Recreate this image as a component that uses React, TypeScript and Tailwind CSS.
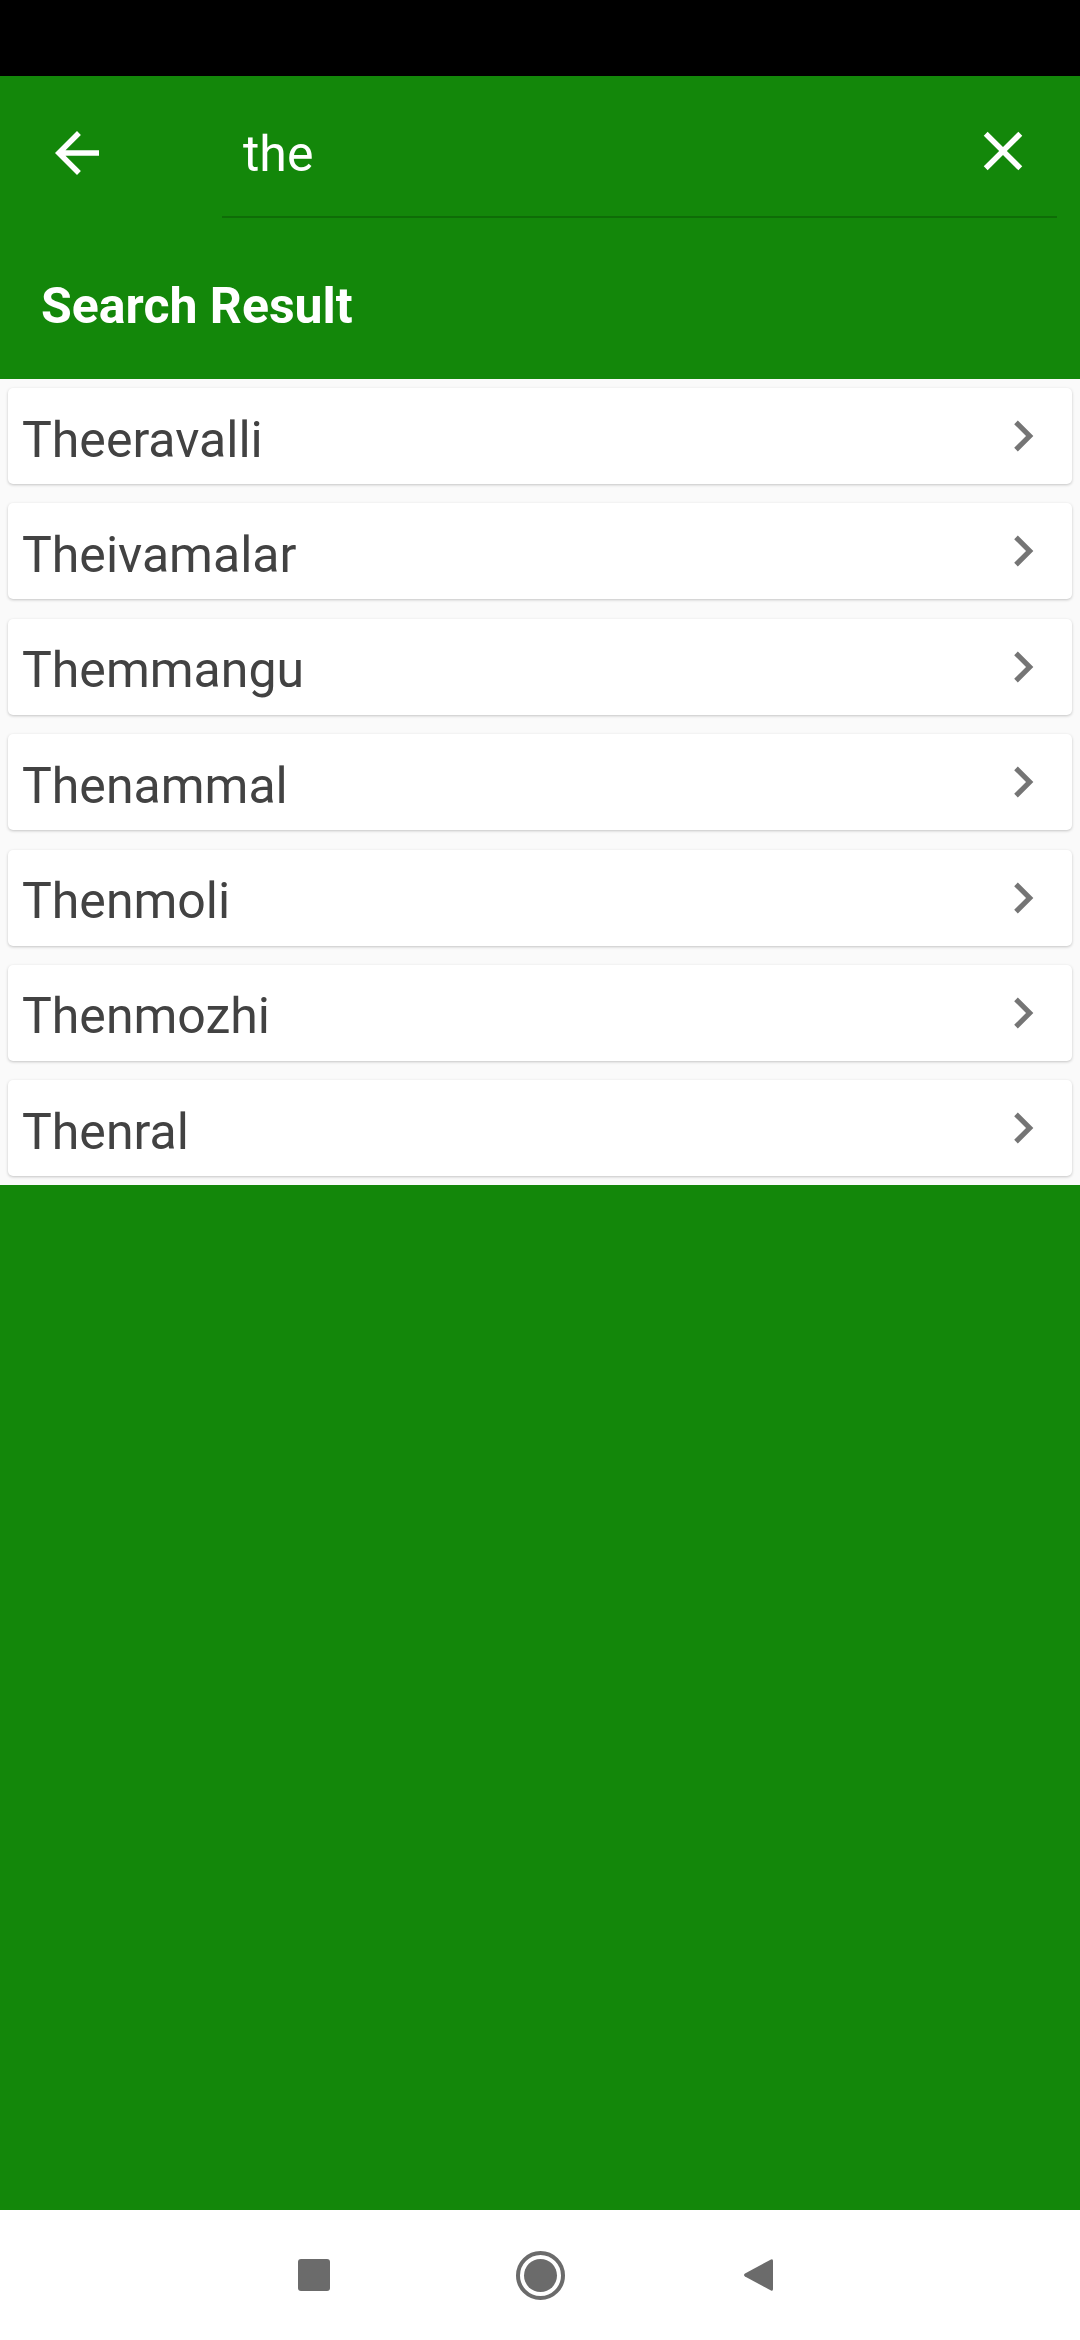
import React from 'react';

const RESULTS = ['Theeravalli', 'Theivamalar', 'Themmangu', 'Thenammal', 'Thenmoli', 'Thenmozhi', 'Thenral'];

const font = { fontFamily: 'Roboto, "Noto Sans", sans-serif' };

const ArrowBack = () => (
  <svg viewBox="0 0 24 24" className="w-[66px] h-[66px]" fill="#ffffff">
    <path d="M20 11H7.83l5.59-5.59L12 4l-8 8 8 8 1.41-1.41L7.83 13H20v-2z" />
  </svg>
);

const CloseIcon = () => (
  <svg viewBox="0 0 24 24" className="w-[66px] h-[66px]" fill="#ffffff">
    <path d="M19 6.41 17.59 5 12 10.59 6.41 5 5 6.41 10.59 12 5 17.59 6.41 19 12 13.41 17.59 19 19 17.59 13.41 12z" />
  </svg>
);

const Chevron = () => (
  <svg viewBox="0 0 24 24" className="w-[62px] h-[62px]" fill="#757575">
    <path d="M10 6 8.59 7.41 13.17 12l-4.58 4.59L10 18l6-6z" />
  </svg>
);

const ResultRow: React.FC<{ name: string }> = ({ name }) => (
  <div className="h-[96px] mx-[8px] bg-white rounded-[5px] shadow-[0_1px_3px_rgba(0,0,0,0.22)] flex items-center justify-between pl-[14px] pr-[18px]">
    <span className="text-[50px] text-[#424242] relative top-[4px]">{name}</span>
    <Chevron />
  </div>
);

export default function App() {
  return (
    <div className="w-[1080px] h-[2340px] flex flex-col bg-[#13870a]" style={font}>
      {/* status bar */}
      <div className="h-[76px] bg-black shrink-0" />

      {/* search toolbar */}
      <div className="h-[154px] flex items-center shrink-0">
        <div className="ml-[44px] w-[66px] h-[66px]">
          <ArrowBack />
        </div>
        <div className="ml-[112px] mr-[23px] flex-1 self-stretch flex items-center justify-between pt-[9px] mb-[12px] border-b-2 border-[#0e6d07]">
          <span className="pl-[21px] text-[50px] text-white relative top-[4px]">the</span>
          <div className="mr-[21px]">
            <CloseIcon />
          </div>
        </div>
      </div>

      {/* title */}
      <div className="h-[149px] pt-[47px] pl-[41px] shrink-0">
        <h1 className="text-[50px] font-bold text-white leading-[normal]">Search Result</h1>
      </div>

      {/* results */}
      <div className="bg-[#fafafa] py-[9px] flex flex-col gap-[19.4px] shrink-0">
        {RESULTS.map(r => (
          <ResultRow key={r} name={r} />
        ))}
      </div>

      <div className="flex-1" />

      {/* nav bar */}
      <div className="h-[130px] bg-white shrink-0 flex items-center justify-center">
        <div className="w-[224px] flex justify-center">
          <div className="w-[32px] h-[32px] rounded-[3px] bg-[#6b6b6b] mr-[8px]" />
        </div>
        <div className="w-[220px] flex justify-center">
          <div className="w-[49px] h-[49px] rounded-full border-[4px] border-[#6b6b6b] flex items-center justify-center">
            <div className="w-[33px] h-[33px] rounded-full bg-[#6b6b6b]" />
          </div>
        </div>
        <div className="w-[224px] flex justify-center">
          <svg viewBox="0 0 32 36" className="w-[32px] h-[36px] mr-[8px]">
            <path d="M29 2.5 Q31 1.5 31 4 L31 32 Q31 34.5 29 33.5 L3 19.5 Q1 18 3 16.5 Z" fill="#6b6b6b" />
          </svg>
        </div>
      </div>
    </div>
  );
}
